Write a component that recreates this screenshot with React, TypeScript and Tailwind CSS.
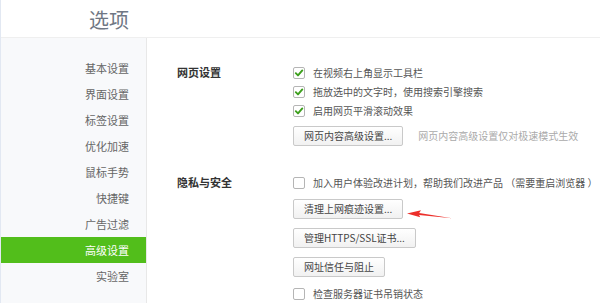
import React from "react";

const font = { fontFamily: '"Noto Sans CJK SC", "Noto Sans", sans-serif' };

function Check({ checked }: { checked?: boolean }) {
  return (
    <span className="w-[12px] h-[12px] border border-[#b5b5b5] rounded-[2px] bg-white flex items-center justify-center shrink-0">
      {checked && (
        <svg width="10" height="10" viewBox="0 0 10 10">
          <path d="M1.8 5.2 L4 7.4 L8.3 2.4" fill="none" stroke="#3c9f1c" strokeWidth="1.9" strokeLinecap="round" strokeLinejoin="round" />
        </svg>
      )}
    </span>
  );
}

function Row({ checked, text }: { checked?: boolean; text: string }) {
  return (
    <div className="h-[19px] flex items-center">
      <Check checked={checked} />
      <span className="ml-[8px] text-[10px] text-[#555] whitespace-pre leading-none">{text}</span>
    </div>
  );
}

function Btn({ text, className = "" }: { text: string; className?: string }) {
  return (
    <div className={"h-[20px] flex items-center " + className}>
      <div className="h-[20px] px-[10px] flex items-center border border-[#c9c9c9] rounded-[2px] bg-gradient-to-b from-white to-[#f1f1f1] text-[10px] text-[#444] whitespace-nowrap leading-none">
        {text}
      </div>
    </div>
  );
}

const items = ["基本设置", "界面设置", "标签设置", "优化加速", "鼠标手势", "快捷键", "广告过滤", "高级设置", "实验室"];

export default function App() {
  return (
    <div className="relative w-[600px] h-[303px] overflow-hidden bg-white border-l border-[#e2e8f2] flex flex-col" style={font}>
      <div className="h-[38px] shrink-0 border-b border-[#efefef] flex items-center pl-[88px] pt-[3px]">
        <span className="text-[20px] text-[#6f7784] leading-none">选项</span>
      </div>
      <div className="flex flex-1">
        <div className="w-[146px] shrink-0 bg-[#f8f9fb] border-r border-[#e8e8e8] pt-[17px]">
          {items.map((it) => (
            <div
              key={it}
              className={
                "h-[26px] flex items-center justify-end pr-[17px] text-[11px] leading-none " +
                (it === "高级设置" ? "bg-[#52be1b] text-white" : "text-[#666]")
              }
            >
              {it}
            </div>
          ))}
        </div>
        <div className="flex-1 pt-[25px] pl-[30px]">
          <div className="flex">
            <div className="w-[116px] h-[19px] flex items-center text-[11px] font-bold text-[#333] leading-none">网页设置</div>
            <div className="flex flex-col">
              <Row checked text="在视频右上角显示工具栏" />
              <Row checked text="拖放选中的文字时，使用搜索引擎搜索" />
              <Row checked text="启用网页平滑滚动效果" />
              <div className="flex items-center mt-[6px]">
                <Btn text="网页内容高级设置..." />
                <span className="ml-[15px] text-[10px] text-[#aaa] whitespace-nowrap leading-none">网页内容高级设置仅对极速模式生效</span>
              </div>
            </div>
          </div>
          <div className="flex mt-[27px]">
            <div className="w-[116px] h-[19px] flex items-center text-[11px] font-bold text-[#333] leading-none">隐私与安全</div>
            <div className="flex flex-col">
              <Row text="加入用户体验改进计划，帮助我们改进产品 （需要重启浏览器 ）" />
              <Btn text="清理上网痕迹设置..." className="mt-[7px]" />
              <Btn text="管理HTTPS/SSL证书..." className="mt-[9px]" />
              <Btn text="网址信任与阻止" className="mt-[9px]" />
              <div className="mt-[7px]">
                <Row text="检查服务器证书吊销状态" />
              </div>
            </div>
          </div>
        </div>
      </div>
      <svg className="absolute left-[404px] top-[207px]" width="50" height="14" viewBox="0 0 50 14">
        <polygon points="2,6.5 16,3.3 14.2,6.1 47,11.2 14,8 15.3,10.3" fill="#ec2f2a" />
      </svg>
    </div>
  );
}
